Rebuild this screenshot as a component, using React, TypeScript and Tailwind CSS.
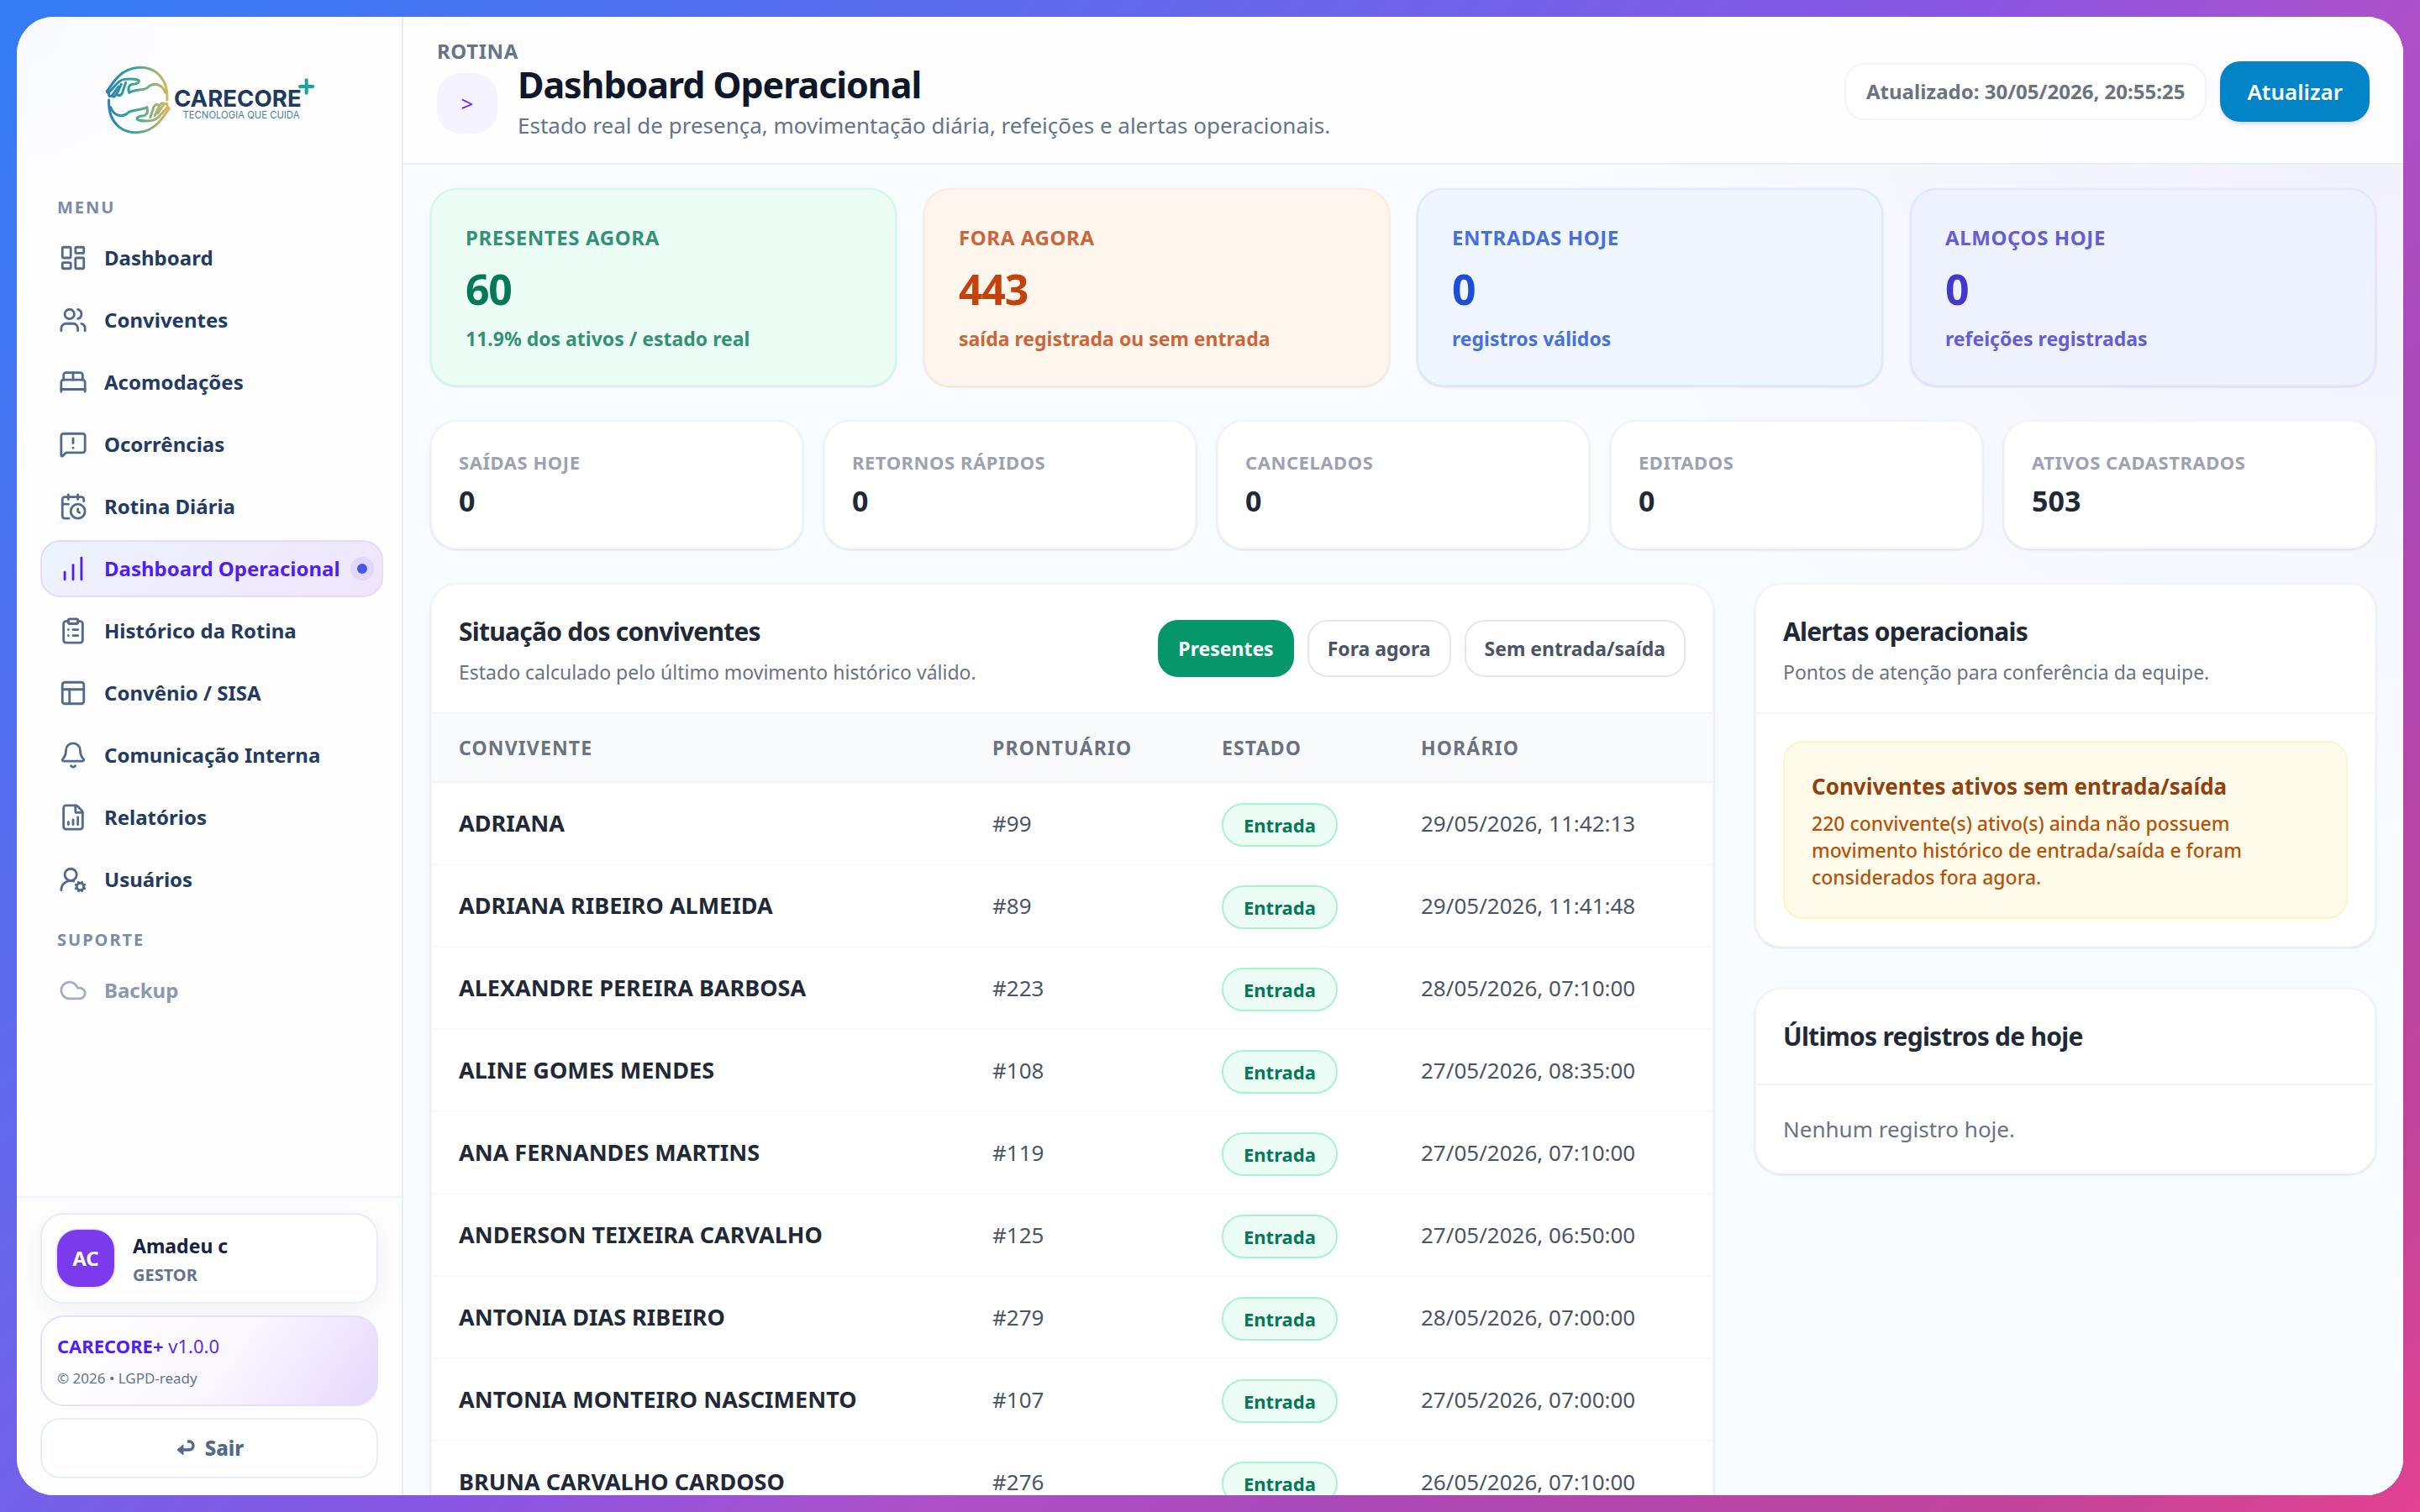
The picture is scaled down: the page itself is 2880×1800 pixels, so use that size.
import {
  BedDouble,
  Bell,
  CalendarClock,
  ChartNoAxesColumnIncreasing,
  ClipboardList,
  Cloud,
  FileChartColumnIncreasing,
  LayoutDashboard,
  MessageSquareWarning,
  PanelsTopLeft,
  UserRoundCog,
  Users,
} from 'lucide-react';

const menu = [
  { label: 'Dashboard', icon: LayoutDashboard },
  { label: 'Conviventes', icon: Users },
  { label: 'Acomodações', icon: BedDouble },
  { label: 'Ocorrências', icon: MessageSquareWarning },
  { label: 'Rotina Diária', icon: CalendarClock },
  { label: 'Dashboard Operacional', icon: ChartNoAxesColumnIncreasing, active: true },
  { label: 'Histórico da Rotina', icon: ClipboardList },
  { label: 'Convênio / SISA', icon: PanelsTopLeft },
  { label: 'Comunicação Interna', icon: Bell },
  { label: 'Relatórios', icon: FileChartColumnIncreasing },
  { label: 'Usuários', icon: UserRoundCog },
];

const kpis = [
  {
    label: 'Presentes agora',
    value: '60',
    hint: '11.9% dos ativos / estado real',
    className: 'bg-[#ecfdf5] border-[#d1fae5] text-[#047857]',
  },
  {
    label: 'Fora agora',
    value: '443',
    hint: 'saída registrada ou sem entrada',
    className: 'bg-[#fff7ed] border-[#ffedd5] text-[#c2410c]',
  },
  {
    label: 'Entradas hoje',
    value: '0',
    hint: 'registros válidos',
    className: 'bg-[#eff6ff] border-[#dbeafe] text-[#1d4ed8]',
  },
  {
    label: 'Almoços hoje',
    value: '0',
    hint: 'refeições registradas',
    className: 'bg-[#eef2ff] border-[#e0e7ff] text-[#4338ca]',
  },
];

const counters = [
  { label: 'Saídas hoje', value: '0' },
  { label: 'Retornos rápidos', value: '0' },
  { label: 'Cancelados', value: '0' },
  { label: 'Editados', value: '0' },
  { label: 'Ativos cadastrados', value: '503' },
];

const rows = [
  { name: 'ADRIANA', record: '#99', time: '29/05/2026, 11:42:13' },
  { name: 'ADRIANA RIBEIRO ALMEIDA', record: '#89', time: '29/05/2026, 11:41:48' },
  { name: 'ALEXANDRE PEREIRA BARBOSA', record: '#223', time: '28/05/2026, 07:10:00' },
  { name: 'ALINE GOMES MENDES', record: '#108', time: '27/05/2026, 08:35:00' },
  { name: 'ANA FERNANDES MARTINS', record: '#119', time: '27/05/2026, 07:10:00' },
  { name: 'ANDERSON TEIXEIRA CARVALHO', record: '#125', time: '27/05/2026, 06:50:00' },
  { name: 'ANTONIA DIAS RIBEIRO', record: '#279', time: '28/05/2026, 07:00:00' },
  { name: 'ANTONIA MONTEIRO NASCIMENTO', record: '#107', time: '27/05/2026, 07:00:00' },
  { name: 'BRUNA CARVALHO CARDOSO', record: '#276', time: '26/05/2026, 07:10:00' },
];

const filters = ['Presentes', 'Fora agora', 'Sem entrada/saída'];

const Hand = () => (
  <>
    <path d="M383 323 C398 303 406 286 424 270 C462 232 522 228 560 256 C590 280 600 318 598 354" />
    <path d="M383 323 C386 334 392 324 402 314 C418 296 428 282 446 280 C468 278 488 278 497 285 C500 294 482 298 472 298 C460 302 458 314 462 328 C486 314 516 322 530 308 C552 288 582 300 592 328" />
    <path d="M390 330 C388 344 398 344 404 334 L424 306" />
    <path d="M402 340 C408 348 416 336 422 324 L434 298" />
    <path d="M418 332 C424 342 434 338 438 328 L450 292" />
  </>
);

const Logo = () => (
  <svg viewBox="370 225 760 255" className="h-[85px] w-[253px]" role="img" aria-label="CARECORE+ Tecnologia que cuida">
    <defs>
      <linearGradient id="handTop" gradientUnits="userSpaceOnUse" x1="383" y1="0" x2="606" y2="0">
        <stop offset="0" stopColor="#2b7fb5" />
        <stop offset="0.4" stopColor="#2fa596" />
        <stop offset="0.7" stopColor="#83b07c" />
        <stop offset="1" stopColor="#dcb95a" />
      </linearGradient>
      <linearGradient id="handBottom" gradientUnits="userSpaceOnUse" x1="606" y1="0" x2="383" y2="0">
        <stop offset="0" stopColor="#2b7fb5" />
        <stop offset="0.4" stopColor="#2fa596" />
        <stop offset="0.7" stopColor="#83b07c" />
        <stop offset="1" stopColor="#dcb95a" />
      </linearGradient>
    </defs>
    <g fill="none" strokeWidth="9" strokeLinecap="round" strokeLinejoin="round">
      <g stroke="url(#handTop)">
        <Hand />
      </g>
      <g stroke="url(#handBottom)" transform="rotate(180 494 354)">
        <Hand />
      </g>
    </g>
    <text x="622" y="379" fontFamily="Inter, sans-serif" fontWeight="700" fontSize="83" fill="#1e3a5f">
      CARECORE
    </text>
    <text x="654" y="421" fontFamily="Inter, sans-serif" fontWeight="400" fontSize="34" fill="#4b7f9f">
      TECNOLOGIA QUE CUIDA
    </text>
    <path d="M1096 283v46M1073 306h46" stroke="#1aa39a" strokeWidth="12" strokeLinecap="round" />
  </svg>
);

const Sidebar = () => (
  <aside className="flex w-[460px] shrink-0 flex-col border-r-2 border-[#e6edf8] bg-[radial-gradient(circle_at_top_left,#f8f9ff,#fefefe_240px)]">
    <div className="flex justify-center pt-14 pb-16">
      <Logo />
    </div>
    <nav className="flex-1 pr-[22px] pl-7">
      <p className="mt-2 mb-3 px-5 text-[20px] leading-[28px] font-bold tracking-[2px] text-[#7c8aab]">MENU</p>
      <ul className="flex flex-col gap-[6px]">
        {menu.map(({ label, icon: Icon, active }) => (
          <li key={label}>
            <a
              href="#"
              className={
                active
                  ? 'flex h-[68px] items-center gap-5 rounded-3xl border-2 border-[#e4dafb] bg-[linear-gradient(135deg,#edf3ff,#efe5fb)] pl-5 text-[#4f1ff0]'
                  : 'flex h-[68px] items-center gap-5 rounded-3xl border-2 border-transparent pl-5 text-[#233a63]'
              }
            >
              <Icon size={34} className={active ? 'shrink-0' : 'shrink-0 text-[#536a8f]'} />
              <span className="text-[24px] leading-[36px] font-bold whitespace-nowrap">{label}</span>
              {active && (
                <span className="-ml-2 flex size-7 shrink-0 items-center justify-center rounded-full bg-[#e2d6f9]">
                  <span className="size-3 rounded-full bg-[#4657ea]" />
                </span>
              )}
            </a>
          </li>
        ))}
      </ul>
      <p className="mt-6 mb-3 px-5 text-[20px] leading-[28px] font-bold tracking-[2px] text-[#7c8aab]">SUPORTE</p>
      <a href="#" className="flex h-[68px] items-center gap-5 border-2 border-transparent pl-5 text-[#8a98b0]">
        <Cloud size={34} className="shrink-0 text-[#a3aec2]" />
        <span className="text-[24px] leading-[36px] font-bold">Backup</span>
      </a>
    </nav>
    <div className="flex flex-col gap-[14px] border-t-2 border-[#edf2fb] pt-[18px] pr-7 pb-5 pl-7">
      <div className="flex h-[108px] items-center gap-[22px] rounded-[28px] border-2 border-[#e6edf8] bg-white px-[18px] shadow-[0_8px_32px_rgba(15,23,42,0.06)]">
        <div className="flex size-[68px] items-center justify-center rounded-3xl bg-[#7c3aed] text-[24px] font-bold text-white ring-2 ring-[#ede9fe]">
          AC
        </div>
        <div className="pt-1">
          <p className="text-[23px] leading-[36px] font-bold text-[#16213d]">Amadeu c</p>
          <p className="text-[20px] leading-[34px] font-bold text-[#64748b]">GESTOR</p>
        </div>
      </div>
      <div className="h-[108px] rounded-[28px] border-2 border-[#e9defb] bg-[linear-gradient(125deg,#ffffff,#faf7ff_55%,#e6d8fc)] px-[18px] pt-[14px]">
        <p className="text-[22px] leading-[40px] text-[#5b2bea]">
          <b className="text-[#4f1ff0]">CARECORE+</b> v1.0.0
        </p>
        <p className="text-[17px] leading-[38px] text-[#64748b]">© 2026 • LGPD-ready</p>
      </div>
      <button className="flex h-[72px] items-center justify-center gap-3 rounded-3xl border-2 border-[#e6edf8] bg-white text-[24px] font-extrabold text-[#53698c]">
        <svg viewBox="0 0 24 24" className="size-6" fill="none" stroke="currentColor" strokeWidth="3.4" strokeLinejoin="round">
          <path d="M15 4h2a5 5 0 0 1 0 10H5" />
          <path d="M10 8 3 14l7 6z" fill="currentColor" strokeWidth="1" />
        </svg>
        Sair
      </button>
    </div>
  </aside>
);

const Header = () => (
  <header className="flex h-[176px] shrink-0 items-center justify-between border-b-2 border-[#e5edf6] bg-white/85 px-10">
    <div className="pt-1">
      <p className="text-[24px] leading-[28px] font-bold tracking-wide text-[#64748b]">ROTINA</p>
      <div className="flex items-center gap-6">
        <div className="flex size-[72px] items-center justify-center rounded-[28px] bg-[#f5f3ff] text-[26px] text-[#6d28d9]">
          &gt;
        </div>
        <div>
          <h1 className="text-[43px] leading-[52px] font-bold tracking-tight text-[#0f172a]">Dashboard Operacional</h1>
          <p className="text-[26px] leading-[44px] text-[#64748b]">
            Estado real de presença, movimentação diária, refeições e alertas operacionais.
          </p>
        </div>
      </div>
    </div>
    <div className="flex items-center gap-4 pt-1">
      <p className="flex h-[68px] items-center rounded-3xl border-2 border-[#f3f4f6] bg-white px-6 text-[24px] font-bold text-[#6b7280]">
        Atualizado: 30/05/2026, 20:55:25
      </p>
      <button className="h-[72px] rounded-3xl bg-[#0284c7] px-8 text-[26px] font-semibold text-white shadow-md">Atualizar</button>
    </div>
  </header>
);

const ResidentsPanel = () => (
  <section className="rounded-[32px] border-2 border-[#f3f4f6] bg-white shadow-sm">
    <div className="flex h-[152px] items-center justify-between px-8">
      <div className="pt-2">
        <h2 className="text-[30px] leading-[40px] font-bold tracking-tight text-[#1f2937]">Situação dos conviventes</h2>
        <p className="mt-2 text-[23px] leading-[40px] text-[#6b7280]">Estado calculado pelo último movimento histórico válido.</p>
      </div>
      <div className="flex gap-4">
        {filters.map((filter, index) => (
          <button
            key={filter}
            className={
              index === 0
                ? 'h-[68px] rounded-3xl border-2 border-[#059669] bg-[#059669] px-[22px] text-[23px] font-bold text-white'
                : 'h-[68px] rounded-3xl border-2 border-[#e5e7eb] bg-white px-[22px] text-[23px] font-bold text-[#4b5563]'
            }
          >
            {filter}
          </button>
        ))}
      </div>
    </div>
    <table className="w-full table-fixed border-t-2 border-[#f3f4f6] text-left">
      <thead className="bg-[#f9fafb] text-[23px] text-[#6b7280]">
        <tr className="h-[82px] border-b-2 border-[#f3f4f6] tracking-wider">
          <th className="pl-8 font-bold">CONVIVENTE</th>
          <th className="w-[273px] font-bold">PRONTUÁRIO</th>
          <th className="w-[237px] font-bold">ESTADO</th>
          <th className="w-[347px] font-bold">HORÁRIO</th>
        </tr>
      </thead>
      <tbody className="text-[26px] text-[#4b5563]">
        {rows.map((row) => (
          <tr key={row.name} className="h-[98px] border-b-2 border-[#f9fafb]">
            <td className="pl-8 text-[27px] font-bold text-[#1f2937]">{row.name}</td>
            <td>{row.record}</td>
            <td className="pt-1">
              <span className="inline-flex h-[52px] items-center rounded-full border-2 border-[#a7f3d0] bg-[#ecfdf5] px-6 align-middle text-[22px] font-bold text-[#047857]">
                Entrada
              </span>
            </td>
            <td>{row.time}</td>
          </tr>
        ))}
      </tbody>
    </table>
  </section>
);

const AlertsPanel = () => (
  <section className="rounded-[32px] border-2 border-[#f3f4f6] bg-white shadow-sm">
    <div className="flex h-[154px] flex-col justify-center border-b-2 border-[#f3f4f6] px-8 pt-2">
      <h2 className="text-[30px] leading-[40px] font-bold tracking-tight text-[#1f2937]">Alertas operacionais</h2>
      <p className="mt-2 text-[23px] leading-[40px] text-[#6b7280]">Pontos de atenção para conferência da equipe.</p>
    </div>
    <div className="p-8">
      <div className="rounded-3xl border-2 border-[#fef3c7] bg-[#fffbeb] p-8">
        <h3 className="text-[26px] leading-[40px] font-bold text-[#92400e]">Conviventes ativos sem entrada/saída</h3>
        <p className="mt-2 max-w-[540px] text-[23px] leading-[32px] font-medium text-[#b45309]">
          220 convivente(s) ativo(s) ainda não possuem movimento histórico de entrada/saída e foram considerados fora agora.
        </p>
      </div>
    </div>
  </section>
);

const App = () => {
  return (
    <div className="h-screen overflow-hidden bg-[linear-gradient(135deg,#337df5_0%,#7261e9_38%,#8856e2_50%,#ae50c8_62%,#a948b8_72%,#c2449a_90%,#e24291_100%)] p-5 font-['Noto_Sans',sans-serif]">
      <div className="flex h-full overflow-hidden rounded-[44px] bg-white">
        <Sidebar />
        <div className="flex min-w-0 flex-1 flex-col bg-[#f8fbff] bg-[radial-gradient(circle_at_top_right,#f1effe,#f8fbff_1000px)]">
          <Header />
          <main className="min-h-0 flex-1 overflow-hidden px-8 pt-7">
            <div className="grid grid-cols-4 gap-8">
              {kpis.map((kpi) => (
                <div key={kpi.label} className={`h-[236px] rounded-[32px] border-2 px-10 pt-10 shadow-sm ${kpi.className}`}>
                  <p className="text-[24px] leading-[34px] font-bold tracking-wide uppercase opacity-80">{kpi.label}</p>
                  <p className="mt-2 text-[50px] leading-[72px] font-bold tracking-tight">{kpi.value}</p>
                  <p className="text-[23px] leading-[46px] font-bold opacity-80">{kpi.hint}</p>
                </div>
              ))}
            </div>
            <div className="mt-10 grid grid-cols-5 gap-6">
              {counters.map((counter) => (
                <div key={counter.label} className="h-[154px] rounded-[32px] border-2 border-[#f3f4f6] bg-white px-8 pt-8 shadow-sm">
                  <p className="text-[22px] leading-[32px] font-bold tracking-wide text-[#9ca3af] uppercase">{counter.label}</p>
                  <p className="text-[34px] leading-[60px] font-bold text-[#1f2937]">{counter.value}</p>
                </div>
              ))}
            </div>
            <div className="mt-10 grid grid-cols-[minmax(0,1fr)_740px] items-start gap-12">
              <ResidentsPanel />
              <div className="flex flex-col gap-12">
                <AlertsPanel />
                <section className="rounded-[32px] border-2 border-[#f3f4f6] bg-white shadow-sm">
                  <div className="flex h-[114px] items-center border-b-2 border-[#f3f4f6] px-8">
                    <h2 className="text-[30px] leading-[40px] font-bold tracking-tight text-[#1f2937]">Últimos registros de hoje</h2>
                  </div>
                  <p className="px-8 py-8 text-[26px] leading-[40px] text-[#6b7280]">Nenhum registro hoje.</p>
                </section>
              </div>
            </div>
          </main>
        </div>
      </div>
    </div>
  );
};

export default App;
